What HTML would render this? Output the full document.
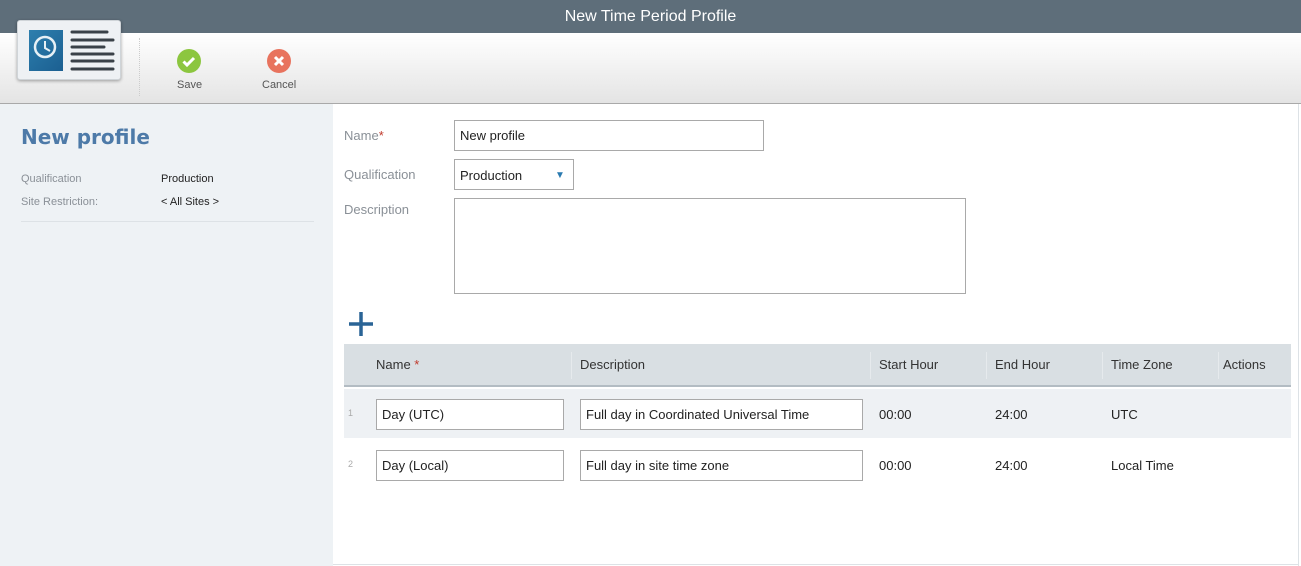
<!DOCTYPE html>
<html><head><meta charset="utf-8"><style>
*{box-sizing:border-box;margin:0;padding:0}
body{width:1301px;height:566px;overflow:hidden;font-family:"Liberation Sans",sans-serif;background:#fff;position:relative}
.abs{position:absolute}
.title{left:0;top:0;width:1301px;height:33px;background:#5e6e7a;color:#fff;font-size:16px;text-align:center;line-height:33px}
.tool{left:0;top:33px;width:1301px;height:71px;background:linear-gradient(#fff,#e4e4e4);border-bottom:1px solid #a9a9a9}
.left{left:0;top:104px;width:333px;height:462px;background:#eef2f5}
.lbl{color:#8a9097;font-size:13px}
.inp{border:1px solid #a9a9a9;background:#fff;font-size:13px;color:#222;padding-left:5px}
.th{top:344px;height:43px;font-size:13px;color:#333;line-height:41px}
.cell{font-size:13px;color:#222}
</style></head><body>
<div class="abs title">New Time Period Profile</div>
<div class="abs tool"></div>
<div class="abs" style="left:17px;top:20px;width:104px;height:60px;background:#eef1f4;border:1px solid #cfd4d8;border-radius:3px;box-shadow:0 1px 3px rgba(0,0,0,.35)">
 <div class="abs" style="left:11px;top:9px;width:34px;height:41px;background:linear-gradient(135deg,#2d7fae,#1b5f91)">
  <svg width="34" height="41"><circle cx="16" cy="17" r="10" fill="none" stroke="#e6f0f5" stroke-width="2.5"/><path d="M16 11v7l5 3" stroke="#e6f0f5" stroke-width="2" fill="none"/></svg></div>
 <svg class="abs" style="left:51px;top:9px" width="46" height="42"><g stroke="#3a4148" stroke-width="3" stroke-linecap="round"><line x1="3" y1="2" x2="38" y2="2"/><line x1="3" y1="10" x2="44" y2="10"/><line x1="3" y1="17" x2="35" y2="17"/><line x1="3" y1="24" x2="44" y2="24"/><line x1="3" y1="31" x2="44" y2="31"/><line x1="3" y1="39" x2="44" y2="39"/></g></svg>
</div>
<div class="abs" style="left:139px;top:38px;height:58px;border-left:1px dotted #ccc"></div>
<svg class="abs" style="left:177px;top:49px" width="24" height="24"><circle cx="12" cy="12" r="12" fill="#8cc63f"/><path d="M6.5 12.5l3.5 3.5 7-7" stroke="#fff" stroke-width="3" fill="none"/></svg>
<div class="abs" style="left:177px;top:79px;font-size:11px;color:#555">Save</div>
<svg class="abs" style="left:267px;top:49px" width="24" height="24"><circle cx="12" cy="12" r="12" fill="#e8735e"/><path d="M8 8l8 8M16 8l-8 8" stroke="#fff" stroke-width="3"/></svg>
<div class="abs" style="left:262px;top:79px;font-size:11px;color:#555">Cancel</div>
<div class="abs left"></div>
<div class="abs" style="left:21px;top:125px;font-size:20px;font-weight:bold;color:#4d7aa8;font-family:'DejaVu Sans',sans-serif">New profile</div>
<div class="abs lbl" style="left:21px;top:173px;font-size:11px">Qualification</div>
<div class="abs" style="left:161px;top:173px;font-size:11px;color:#222">Production</div>
<div class="abs lbl" style="left:21px;top:196px;font-size:11px">Site Restriction:</div>
<div class="abs" style="left:161px;top:196px;font-size:11px;color:#222">&lt; All Sites &gt;</div>
<div class="abs" style="left:21px;top:221px;width:293px;border-top:1px solid #dde2e6"></div>
<div class="abs" style="left:1298px;top:104px;height:462px;border-left:1px solid #dde2e6"></div>
<div class="abs" style="left:333px;top:564px;width:966px;border-top:1px solid #dde2e6"></div>
<div class="abs lbl" style="left:344px;top:128px">Name<span style="color:#c0392b">*</span></div>
<div class="abs inp" style="left:454px;top:120px;width:310px;height:31px;line-height:29px">New profile</div>
<div class="abs lbl" style="left:344px;top:167px">Qualification</div>
<div class="abs inp" style="left:454px;top:159px;width:120px;height:31px;line-height:31px">Production<span style="position:absolute;left:100px;font-size:10px;color:#2a7ab0">▼</span></div>
<div class="abs lbl" style="left:344px;top:202px">Description</div>
<div class="abs inp" style="left:454px;top:198px;width:512px;height:96px"></div>
<svg class="abs" style="left:348px;top:311px" width="26" height="26"><path d="M13 1v24M1 13h24" stroke="#2a6496" stroke-width="3.5"/></svg>
<div class="abs" style="left:344px;top:344px;width:947px;height:43px;background:#d9dfe3;border-bottom:2px solid #b3bcc3"></div>
<div class="abs th" style="left:376px">Name <span style="color:#c0392b">*</span></div>
<div class="abs th" style="left:580px">Description</div>
<div class="abs th" style="left:879px">Start Hour</div>
<div class="abs th" style="left:995px">End Hour</div>
<div class="abs th" style="left:1111px">Time Zone</div>
<div class="abs th" style="left:1223px">Actions</div>
<div class="abs" style="left:571px;top:352px;height:27px;border-left:1px solid #e6eaed"></div>
<div class="abs" style="left:870px;top:352px;height:27px;border-left:1px solid #e6eaed"></div>
<div class="abs" style="left:986px;top:352px;height:27px;border-left:1px solid #e6eaed"></div>
<div class="abs" style="left:1102px;top:352px;height:27px;border-left:1px solid #e6eaed"></div>
<div class="abs" style="left:1218px;top:352px;height:27px;border-left:1px solid #e6eaed"></div>
<div class="abs" style="left:344px;top:389px;width:947px;height:49px;background:#eef1f4"></div>
<div class="abs" style="left:348px;top:408px;font-size:9px;color:#aaa">1</div>
<div class="abs inp" style="left:376px;top:399px;width:188px;height:31px;line-height:29px">Day (UTC)</div>
<div class="abs inp" style="left:580px;top:399px;width:283px;height:31px;line-height:29px">Full day in Coordinated Universal Time</div>
<div class="abs cell" style="left:879px;top:407px">00:00</div>
<div class="abs cell" style="left:995px;top:407px">24:00</div>
<div class="abs cell" style="left:1111px;top:407px">UTC</div>
<div class="abs" style="left:348px;top:459px;font-size:9px;color:#aaa">2</div>
<div class="abs inp" style="left:376px;top:450px;width:188px;height:31px;line-height:29px">Day (Local)</div>
<div class="abs inp" style="left:580px;top:450px;width:283px;height:31px;line-height:29px">Full day in site time zone</div>
<div class="abs cell" style="left:879px;top:458px">00:00</div>
<div class="abs cell" style="left:995px;top:458px">24:00</div>
<div class="abs cell" style="left:1111px;top:458px">Local Time</div>
</body></html>
